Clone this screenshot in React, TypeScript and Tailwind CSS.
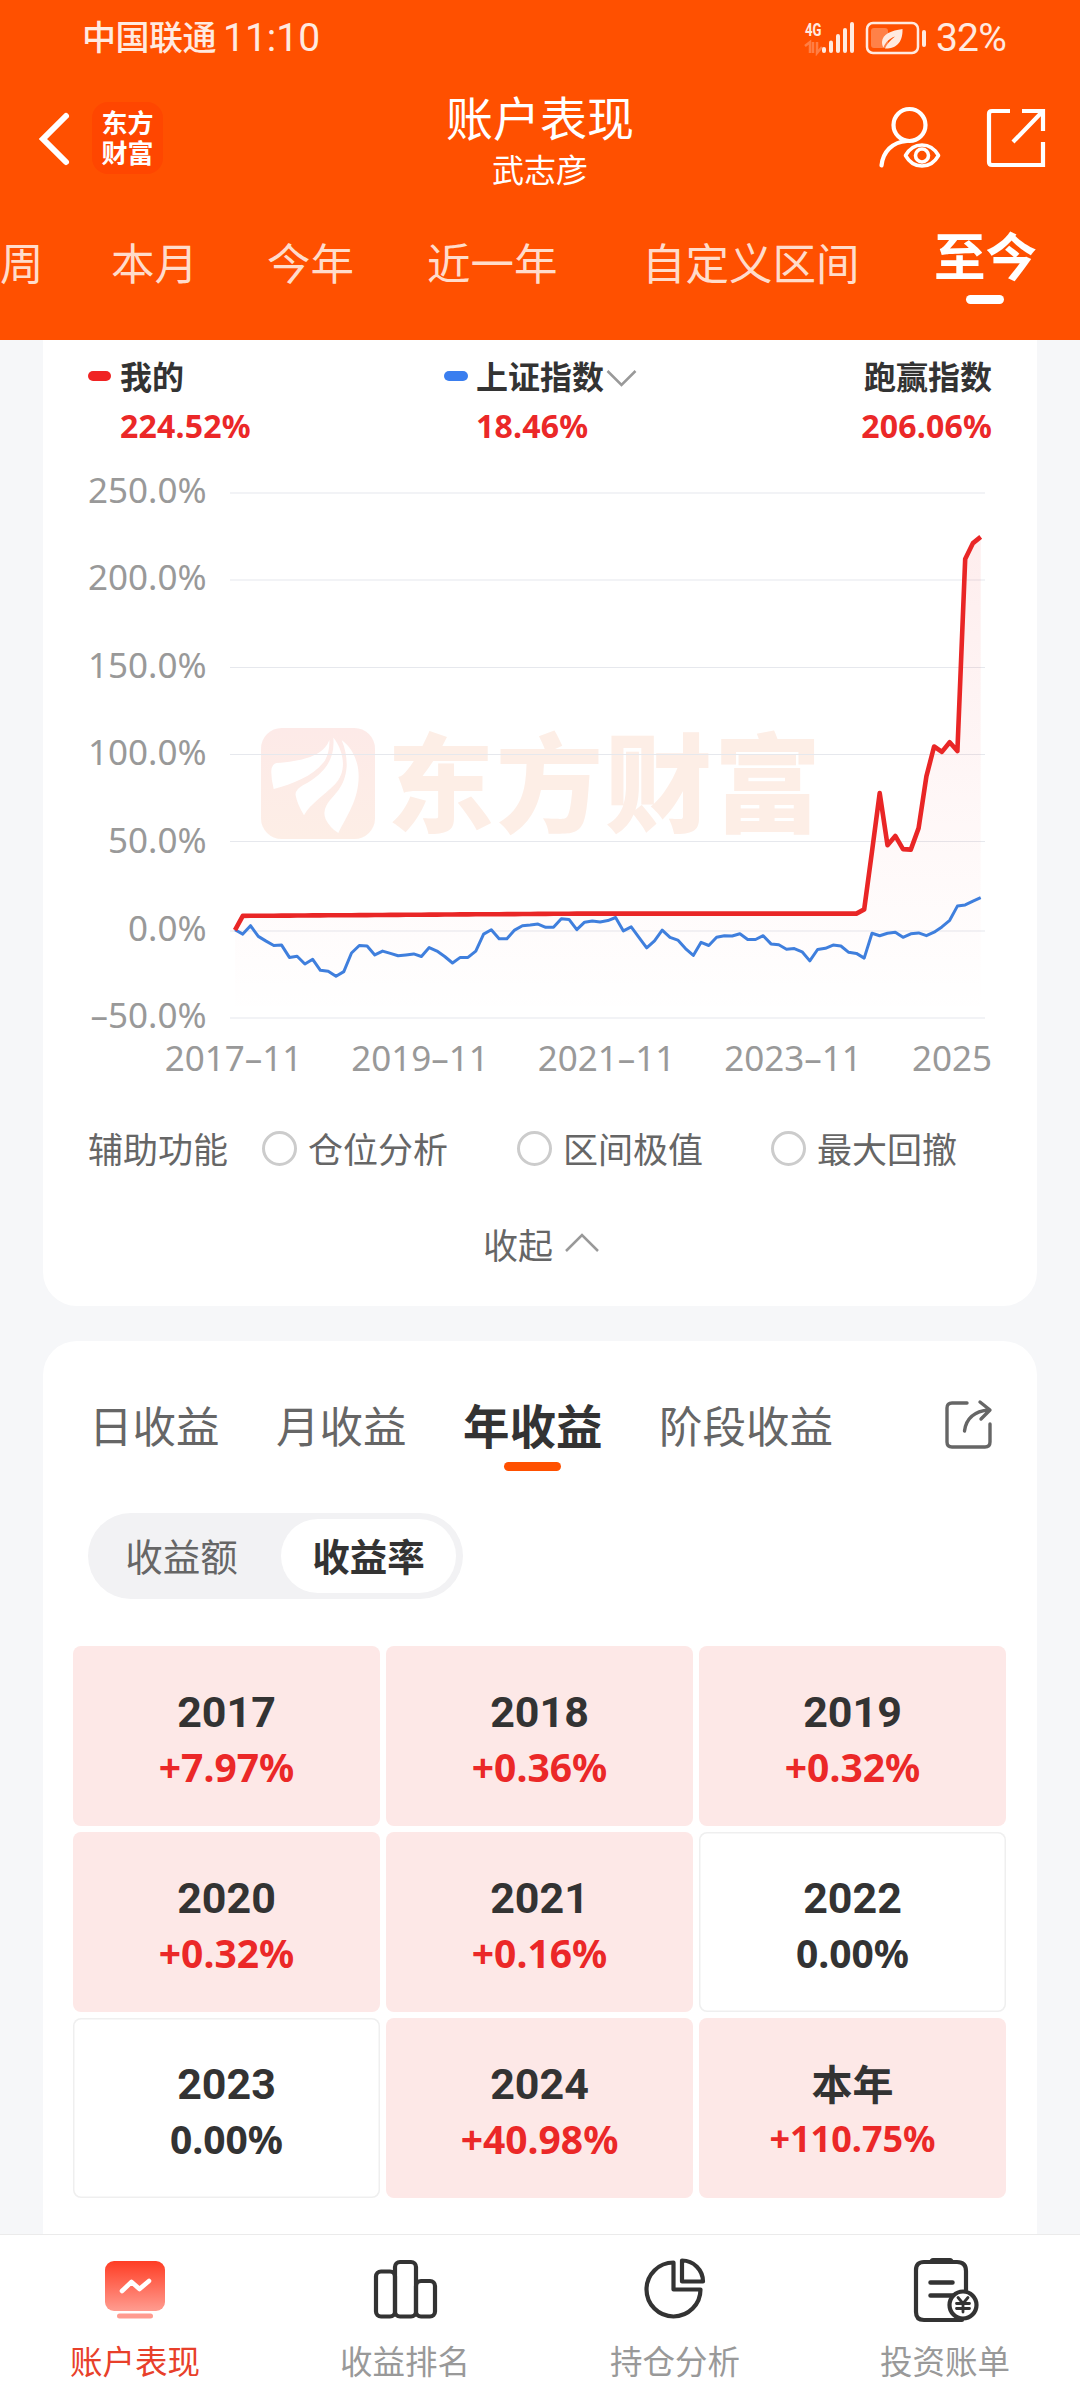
import React, { useState } from "react"
import clsx from "clsx"

const periods = [
    { label: "周", className: "w-[111px]" },
    { label: "本月", className: "w-[156px]" },
    { label: "今年", className: "w-[160px]" },
    { label: "近一年", className: "w-[215px]" },
    { label: "自定义区间", className: "w-[292px]" },
    { label: "至今", className: "w-[104px]" },
]

const yearReturns = [
    { year: "2017", value: "+7.97%" },
    { year: "2018", value: "+0.36%" },
    { year: "2019", value: "+0.32%" },
    { year: "2020", value: "+0.32%" },
    { year: "2021", value: "+0.16%" },
    { year: "2022", value: "0.00%" },
    { year: "2023", value: "0.00%" },
    { year: "2024", value: "+40.98%" },
    { year: "本年", value: "+110.75%" },
]

const gridLines = [
    { label: "250.0%", y: 33 },
    { label: "200.0%", y: 120 },
    { label: "150.0%", y: 207.5 },
    { label: "100.0%", y: 294.5 },
    { label: "50.0%", y: 381.5 },
    { label: "0.0%", y: 471 },
    { label: "–50.0%", y: 558 },
]

const dateLabels = [
    { label: "2017–11", x: 190.5 },
    { label: "2019–11", x: 377 },
    { label: "2021–11", x: 563.5 },
    { label: "2023–11", x: 750 },
    { label: "2025", x: 909 },
]

// monthly values in percent, 2017-11 to 2025-11
const indexData = [
    0.9, -1.6, 3.2, -2.9, -5.6, -8.1, -7.9, -14.9, -14.2, -18.7, -16, -22.3, -22.8, -25.7, -23, -12.4,
    -8.1, -8.4, -13.5, -11.3, -12.6, -14, -13.5, -12.9, -14.4, -9.3, -11.3, -14.4, -18.1, -14.9, -14.9, -11.3,
    -1.6, 0.9, -4.3, -4.3, 0.7, 3.2, 3.6, 4.1, 2.3, 2.3, 7.2, 6.8, 0.9, 5.2, 5.9, 5.4,
    6.1, 7.9, 0.2, 2.5, -3.4, -9.5, -5.4, 0.7, -3.4, -5, -9.9, -13.8, -6.3, -8.1, -3.4, -2.5,
    -2.7, -1.4, -4.7, -4.7, -2.5, -7.2, -7.7, -10.2, -9.9, -11.7, -16.9, -10.4, -9.7, -7.9, -8.4, -12,
    -12.6, -15.3, -1.1, -2.5, -1.1, -0.5, -3.4, -1.4, -0.9, -2.5, -0.5, 2.5, 6.3, 14.4, 15.1, 17.2, 19.2,
]

const mineData = [
    0.7,
    ...Array.from({ length: 80 }, (_, i) => Math.min(8.8 + i * 0.03, 10.1)),
    12.5, 45.6, 79, 49.2, 54.5, 47, 46.7, 59, 88.5, 105.6, 102.5, 108, 103, 212.8, 221.8, 225.4,
]

const toPoints = (data: number[]) =>
    data.map((v, i) => `${(192 + i * 7.768).toFixed(1)},${(471.3 - v * 1.75).toFixed(1)}`).join(" ")

const StatusBar = () => (
    <div className="flex h-[74px] items-center pl-[82px] pr-[74px] pt-[2px] font-['Roboto','Noto_Sans_CJK_SC',sans-serif] text-[#ffeae0]">
        <span className="text-[34px] leading-none font-medium tracking-[-0.5px]">中国联通</span>
        <span className="ml-[7px] text-[39px] leading-none">11:10</span>
        <svg className="ml-auto" width="54" height="36" viewBox="0 0 54 36" fill="currentColor">
            <text x="1" y="16" fontSize="18" fontWeight="700" textLength="16.500" lengthAdjust="spacingAndGlyphs">4G</text>
            <path d="M1 26l5-4v11M9 22v11M13 22v11l5-6" stroke="currentColor" strokeWidth="2.500" fill="none" opacity=".3" />
            <rect x="18" y="27" width="4" height="6" rx="2" />
            <rect x="25" y="20.500" width="4" height="12.500" rx="2" />
            <rect x="32" y="14" width="4" height="19" rx="2" />
            <rect x="39" y="8" width="4" height="25" rx="2" />
            <rect x="46" y="2" width="4" height="31" rx="2" />
        </svg>
        <svg className="ml-[7px]" width="62" height="36" viewBox="0 0 62 36" fill="none">
            <rect x="2" y="3" width="51" height="30" rx="6" stroke="currentColor" strokeWidth="2.500" />
            <rect x="6" y="8" width="17" height="20" rx="3" fill="currentColor" opacity=".32" />
            <rect x="57" y="10" width="4" height="17" rx="2" fill="currentColor" />
            <path d="M37.500 9c-11 1.500-20 5-20.500 13 0 3 .8 4.500 1.500 5.500C20 23 24 18.500 30 16.500c-5 4-8.500 8-10 12 9 .5 18-4 17.500-19.500z" fill="currentColor" />
        </svg>
        <span className="ml-[9px] text-[39px] leading-none tracking-[-0.8px]">32%</span>
    </div>
)

const NavBar = () => (
    <div className="flex h-[134px] items-start">
        <div className="flex w-[360px] pl-[38px] pt-[28px]">
            <svg className="mt-[7px]" width="34" height="60" viewBox="0 0 34 60" fill="none" stroke="#fff" strokeWidth="6" strokeLinecap="round">
                <path d="M28 7L5 30 28 53" />
            </svg>
            <div className="ml-[20px] flex h-[72px] w-[71px] flex-col items-center justify-center gap-[3px] rounded-2xl bg-[#ff4600] text-[26px] font-bold text-white">
                <span className="leading-[27px]">东方</span>
                <span className="leading-[27px]">财富</span>
            </div>
        </div>
        <div className="flex flex-1 flex-col items-center pt-[20px] text-white">
            <h1 className="text-[47px] leading-[49px]">账户表现</h1>
            <p className="mt-[10px] text-[32px] leading-[34px]">武志彦</p>
        </div>
        <div className="flex w-[360px] justify-end pr-[34px] pt-[30px] text-white">
            <svg width="66" height="68" viewBox="0 0 66 68" fill="none" stroke="currentColor" strokeWidth="4.200" strokeLinecap="round">
                <circle cx="32.500" cy="21" r="16" />
                <path d="M4.500 61.500C6 48 15 38 30 37" />
                <path d="M28.500 51.500C33 43.500 39 41 45 41s12 2.500 16.500 10.500C57 59.500 51 62 45 62s-12-2.500-16.500-10.500z" strokeLinejoin="round" strokeWidth="3.600" />
                <circle cx="45" cy="51.500" r="6.500" strokeWidth="3.600" />
            </svg>
            <svg className="ml-[41px]" width="62" height="68" viewBox="0 0 62 68" fill="none" stroke="currentColor" strokeWidth="4.200">
                <path d="M26 7H8q-3 0-3 3v48q0 3 3 3h51V38M38 7h21v20M58.500 7.500L29 38" />
            </svg>
        </div>
    </div>
)

const PeriodTabs = () => {
    const [active, setActive] = useState("至今")

    return (
        <div className="flex h-[132px] overflow-hidden whitespace-nowrap pt-[20px]">
            {periods.map(({ label, className }) => (
                <button
                    key={label}
                    onClick={() => setActive(label)}
                    className={clsx("flex shrink-0 flex-col items-start", className)}
                >
                    {active === label ? (
                        <>
                            <span className="text-[51.5px] leading-[56px] font-bold text-white">{label}</span>
                            <span className="ml-[32px] mt-[11px] h-[9px] w-[38px] rounded-full bg-white" />
                        </>
                    ) : (
                        <span className="text-[43.500px] leading-[70px] text-[#ffdccb]">{label}</span>
                    )}
                </button>
            ))}
        </div>
    )
}

const Legend = () => (
    <div className="flex h-[120px] px-[45px] pt-[20px] text-[32px] font-bold text-[#333]">
        <div className="flex w-[356px]">
            <span className="mt-[11px] h-[10px] w-[23px] rounded-full bg-[#f02323]" />
            <div className="ml-[9px] flex flex-col">
                <span className="leading-[34px]">我的</span>
                <span className="mt-[14px] tracking-[0.2px] leading-[35px] text-[#eb2828]">224.52%</span>
            </div>
        </div>
        <div className="flex">
            <span className="mt-[11px] h-[10px] w-[24px] rounded-full bg-[#3a7eef]" />
            <div className="ml-[8px] flex flex-col">
                <div className="flex items-center leading-[34px]">
                    上证指数
                    <svg className="ml-[2px] mt-[2px]" width="32" height="20" viewBox="0 0 32 20" fill="none" stroke="#999" strokeWidth="2.500">
                        <path d="M1.500 3L15.500 17 29.500 3" />
                    </svg>
                </div>
                <span className="mt-[14px] tracking-[0.2px] leading-[35px] text-[#eb2828]">18.46%</span>
            </div>
        </div>
        <div className="ml-auto flex flex-col items-end">
            <span className="leading-[34px]">跑赢指数</span>
            <span className="mt-[14px] tracking-[0.2px] leading-[35px] text-[#eb2828]">206.06%</span>
        </div>
    </div>
)

const PerformanceChart = () => (
    <svg className="block" width="994" height="630" viewBox="0 0 994 630">
        <defs>
            <linearGradient id="area" gradientUnits="userSpaceOnUse" x1="0" y1="77" x2="0" y2="558">
                <stop offset="0" stopColor="#f02323" stopOpacity=".08" />
                <stop offset="1" stopColor="#f02323" stopOpacity="0" />
            </linearGradient>
            <linearGradient id="badge" x1="0" y1="0" x2="0" y2="1">
                <stop offset="0" stopColor="#fdeae8" />
                <stop offset="1" stopColor="#fdeee6" />
            </linearGradient>
        </defs>

        <svg x="218" y="268" width="114" height="111" viewBox="603 678 342 280" preserveAspectRatio="none">
            <rect x="603" y="678" width="342" height="280" rx="62" ry="52" fill="url(#badge)" />
            <g fill="#fff">
                <path d="M808 708C790 750 720 762 650 766Q636 768 634 785Q633 805 641 832C700 818 760 800 795 760Q810 735 808 708z" />
                <path d="M820 702C826 760 790 795 730 822Q704 834 707 848Q712 870 732 898C750 870 790 850 825 820C860 790 855 740 820 702z" />
                <path d="M845 708C880 730 896 765 896 800C896 860 860 900 835 943Q810 930 797 908Q788 890 800 872C820 845 855 830 860 775Q861 740 845 708z" />
            </g>
        </svg>
        <text x="344" y="364" fontSize="107" fontWeight="900" letterSpacing="2" fill="#fdeee6">东方财富</text>

        {gridLines.map(({ y }) => (
            <line key={y} x1="187" x2="942" y1={y} y2={y} stroke="#e6e8ed" strokeWidth="1.200" />
        ))}

        <polygon points={`192,558 ${toPoints(mineData)} 937.7,558`} fill="url(#area)" />
        <polyline points={toPoints(indexData)} fill="none" stroke="#3f7fdd" strokeWidth="3" strokeLinejoin="round" />
        <polyline points={toPoints(mineData)} fill="none" stroke="#e92626" strokeWidth="4.600" strokeLinejoin="round" />

        <g fontSize="35" fill="#999">
            {gridLines.map(({ label }, i) => (
                <text key={label} x="163.500" y={42.5 + i * 87.6} textAnchor="end">{label}</text>
            ))}
            {dateLabels.map(({ label, x }) => (
                <text key={label} x={x} y="610.500" textAnchor="middle">{label}</text>
            ))}
        </g>
    </svg>
)

const Radio = ({ label, className }: { label: string; className?: string }) => (
    <label className={clsx("flex items-center", className)}>
        <span className="-mt-[2px] h-[35px] w-[35px] rounded-full border-[3px] border-[#ccc]" />
        <span className="ml-[11px]">{label}</span>
    </label>
)

const PerformanceCard = () => (
    <section className="h-[966px] rounded-b-[34px] bg-white">
        <Legend />
        <PerformanceChart />
        <div className="flex h-[118px] items-center pl-[45px] text-[35px] leading-none text-[#666]">
            <span>辅助功能</span>
            <Radio label="仓位分析" className="ml-[34px]" />
            <Radio label="区间极值" className="ml-[69px]" />
            <Radio label="最大回撤" className="ml-[68px]" />
        </div>
        <button className="mt-[17px] flex h-[40px] w-full items-center justify-center pl-[3px] text-[35px] leading-none text-[#666]">
            收起
            <svg className="-mt-[6px] ml-[11px]" width="36" height="22" viewBox="0 0 36 22" fill="none" stroke="#999" strokeWidth="2.500">
                <path d="M2 20L18 4l16 16" />
            </svg>
        </button>
    </section>
)

const incomeTabs = ["日收益", "月收益", "年收益", "阶段收益"]

const IncomeCard = () => {
    const [tab, setTab] = useState("年收益")
    const [mode, setMode] = useState("收益率")

    return (
        <section className="h-[893px] rounded-t-[34px] bg-white">
            <div className="flex h-[172px] items-start pl-[46px] pt-[60px]">
                <div className="flex gap-[56.500px]">
                    {incomeTabs.map((label) => (
                        <button key={label} onClick={() => setTab(label)} className="flex flex-col items-center">
                            <span
                                className={clsx(
                                    "leading-[50px]",
                                    tab === label ? "text-[46.5px] font-bold text-[#333]" : "text-[43.500px] text-[#666]"
                                )}
                            >
                                {label}
                            </span>
                            {tab === label && <span className="mt-[11px] h-[9px] w-[57px] rounded-full bg-[#ff5000]" />}
                        </button>
                    ))}
                </div>
                <svg className="ml-auto mr-[44px] -mt-[3px]" width="50" height="52" viewBox="0 0 50 52" fill="none" stroke="#666" strokeWidth="3.400" strokeLinecap="round" strokeLinejoin="round">
                    <path d="M24 5H9Q4 5 4 10v34q0 5 5 5h33q5 0 5-5V26" />
                    <path d="M37 4l10 8-9 9M46 12C31 13 23 21 21.500 33" />
                </svg>
            </div>

            <div className="ml-[45px] flex h-[86px] w-[375px] items-center rounded-full bg-[#f2f2f4] pr-[7px] text-[37.5px] leading-none">
                {["收益额", "收益率"].map((label) => (
                    <button
                        key={label}
                        onClick={() => setMode(label)}
                        className={clsx(
                            "h-[74px] rounded-full pt-[2px]",
                            mode === label ? "w-[175px] bg-white font-bold text-[#333]" : "w-[193px] pr-[6px] text-[#666]"
                        )}
                    >
                        {label}
                    </button>
                ))}
            </div>

            <div className="ml-[30px] mr-[31px] mt-[47px] grid grid-cols-3 gap-[6px]">
                {yearReturns.map(({ year, value }) => {
                    const up = value.startsWith("+")
                    return (
                        <div
                            key={year}
                            className={clsx(
                                "flex h-[180px] flex-col items-center rounded-lg pt-[43px] font-bold text-[#333]",
                                up ? "bg-[#fde8e7]" : "shadow-[inset_0_0_0_1.5px_#efefef]"
                            )}
                        >
                            <span
                                className={clsx(
                                    "h-[46px] font-['Roboto','Noto_Sans_CJK_SC',sans-serif]",
                                    year === "本年" ? "text-[41px] leading-[51px]" : "text-[43px] leading-[46px]"
                                )}
                            >
                                {year}
                            </span>
                            <span
                                className={clsx(
                                    "mt-[8px] leading-[47px]",
                                    value.length > 7 ? "text-[36px]" : "text-[39px]",
                                    up && "text-[#eb2828]"
                                )}
                            >
                                {value}
                            </span>
                        </div>
                    )
                })}
            </div>
        </section>
    )
}

const AccountIcon = () => (
    <svg width="70" height="70" viewBox="0 0 70 70" fill="none">
        <defs>
            <linearGradient id="screen" x1="0" y1="0" x2="0" y2="1">
                <stop offset="0" stopColor="#ff3d24" />
                <stop offset="1" stopColor="#ff9c90" />
            </linearGradient>
        </defs>
        <rect x="5" y="7" width="60" height="50" rx="9" fill="url(#screen)" />
        <path d="M22 37l9.500-9 8 7L49 27" stroke="#fff" strokeWidth="4.600" strokeLinecap="round" strokeLinejoin="round" />
        <rect x="17" y="59.500" width="36" height="5" rx="2.500" fill="#ff9c90" />
    </svg>
)

const RankIcon = () => (
    <svg width="70" height="70" viewBox="0 0 70 70" fill="none" stroke="#333" strokeWidth="4.200">
        <rect x="6" y="17.500" width="19" height="45" rx="5" />
        <rect x="25" y="8" width="21" height="54.500" rx="5" />
        <rect x="46" y="27" width="19" height="35.500" rx="5" />
    </svg>
)

const PieIcon = () => (
    <svg width="70" height="70" viewBox="0 0 70 70" fill="none" stroke="#333" strokeWidth="4.200" strokeLinejoin="round">
        <path d="M33.500 8.500v27h27A27 27 0 1 1 33.500 8.500z" />
        <path d="M42 6.500v21h21A21 21 0 0 0 42 6.500z" />
    </svg>
)

const BillIcon = () => (
    <svg width="70" height="70" viewBox="0 0 70 70" fill="none" stroke="#333" strokeWidth="4.200" strokeLinecap="round">
        <path d="M56 36V17q0-9-9-9H14q-8 0-8 8v42q0 8 8 8h38" />
        <path d="M19 8q1-4 4-4h17q3 0 4 4z" fill="#333" stroke="none" />
        <path d="M20.500 28.500h22M20.500 41.500h22" strokeWidth="4.500" />
        <circle cx="53" cy="51" r="13.500" fill="#fff" />
        <path d="M48 43.500l5 6 5-6M46.500 49.500h13M46.500 54.500h13M53 50v8" strokeWidth="2.800" />
    </svg>
)

const bottomTabs = [
    { label: "账户表现", icon: AccountIcon },
    { label: "收益排名", icon: RankIcon },
    { label: "持仓分析", icon: PieIcon },
    { label: "投资账单", icon: BillIcon },
]

const BottomNav = () => (
    <nav className="flex h-[166px] border-t border-[#ebebeb] bg-white">
        {bottomTabs.map(({ label, icon: Icon }, index) => (
            <button key={label} className="flex flex-1 flex-col items-center pt-[19px]">
                <Icon />
                <span className={clsx("mt-[21px] text-[32.5px] leading-[34px]", index === 0 ? "text-[#e8402a]" : "text-[#999]")}>
                    {label}
                </span>
            </button>
        ))}
    </nav>
)

const App = () => {
    return (
        <div className="flex h-[2400px] w-[1080px] flex-col overflow-hidden bg-[#f6f7f9] font-['Noto_Sans','Noto_Sans_CJK_SC',sans-serif]">
            <header className="h-[340px] bg-[#ff5000]">
                <StatusBar />
                <NavBar />
                <PeriodTabs />
            </header>
            <main className="flex h-[1894px] flex-col gap-[35px] px-[43px]">
                <PerformanceCard />
                <IncomeCard />
            </main>
            <BottomNav />
        </div>
    )
}

export default App
